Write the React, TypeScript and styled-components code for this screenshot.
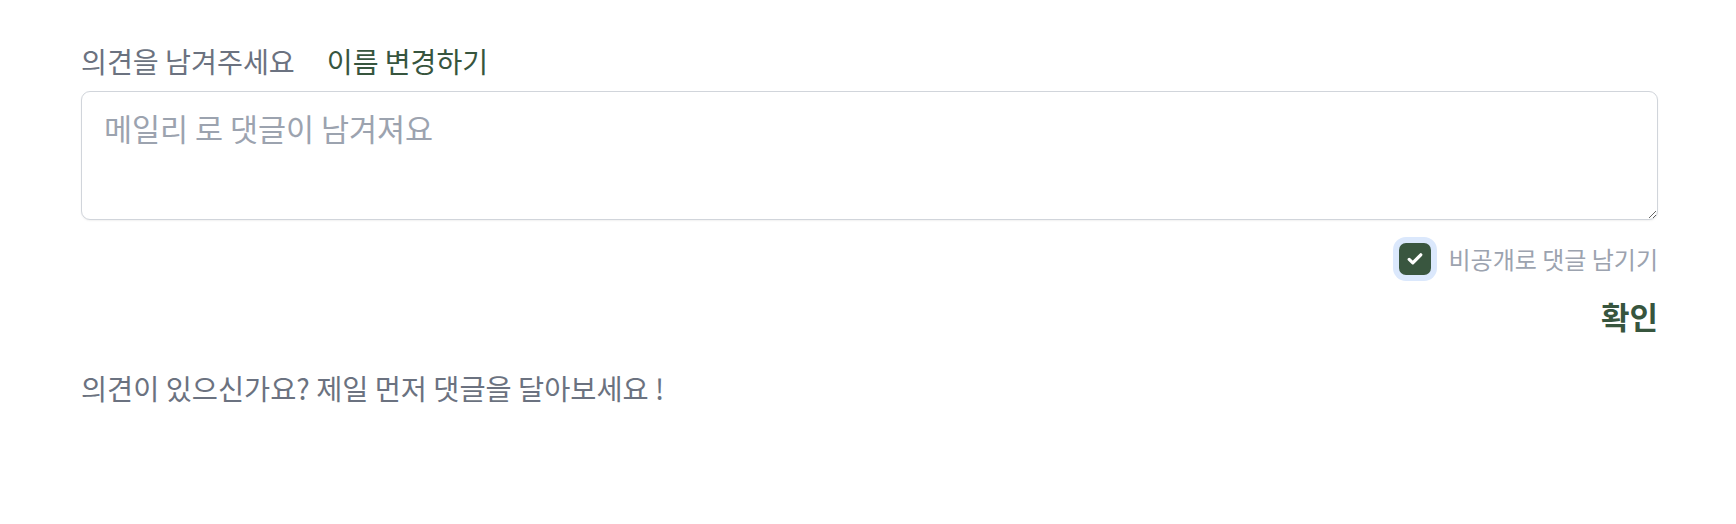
import React, { useState } from 'react';
import styled, { createGlobalStyle } from 'styled-components';

const GlobalStyle = createGlobalStyle`
  body {
    margin: 0;
    background: #ffffff;
    font-family: 'Noto Sans CJK KR', 'Noto Sans', sans-serif;
  }
`;

export default function App() {
  const [isPrivate, setIsPrivate] = useState(true);

  return (
    <>
      <GlobalStyle />
      <CommentSection>
        <LabelRow>
          <Label>의견을 남겨주세요</Label>
          <NameButton>이름 변경하기</NameButton>
        </LabelRow>
        <TextArea placeholder="메일리 로 댓글이 남겨져요" />
        <PrivateRow onClick={() => setIsPrivate(!isPrivate)}>
          <CheckBox $checked={isPrivate}>
            {isPrivate && (
              <svg width="20" height="20" viewBox="0 0 20 20" fill="none">
                <path
                  d="M4.2 10.4l3.6 3.4 8-8"
                  stroke="#ffffff"
                  strokeWidth="3.2"
                  strokeLinecap="round"
                  strokeLinejoin="round"
                />
              </svg>
            )}
          </CheckBox>
          <PrivateText>비공개로 댓글 남기기</PrivateText>
        </PrivateRow>
        <SubmitRow>
          <SubmitButton>확인</SubmitButton>
        </SubmitRow>
        <EmptyText>의견이 있으신가요? 제일 먼저 댓글을 달아보세요 !</EmptyText>
      </CommentSection>
    </>
  );
}

const CommentSection = styled.div`
  display: flex;
  flex-direction: column;
  padding: 40px 78px 40px 81px;
`;

const LabelRow = styled.div`
  display: flex;
  align-items: center;
  gap: 32px;
  height: 40px;
`;

const Label = styled.span`
  font-size: 28.2px;
  color: #6b7280;
`;

const NameButton = styled.button`
  border: none;
  background: none;
  padding: 0;
  font-family: inherit;
  font-size: 28.1px;
  color: #37553e;
  cursor: pointer;
`;

const TextArea = styled.textarea`
  margin-top: 11px;
  height: 129px;
  box-sizing: border-box;
  padding: 14px 22px;
  border: 1.5px solid #d1d5db;
  border-radius: 9px;
  box-shadow: 0 1px 2px rgb(0 0 0 / 6%);
  font-family: inherit;
  font-size: 30.5px;
  line-height: 1.5;
  color: #374151;
  outline: none;

  &::placeholder {
    color: #9ca3af;
  }
`;

const PrivateRow = styled.label`
  margin-top: 21px;
  align-self: flex-end;
  display: flex;
  align-items: center;
  gap: 18px;
  cursor: pointer;
`;

const CheckBox = styled.span<{ $checked: boolean }>`
  width: 32px;
  height: 32px;
  border-radius: 7px;
  display: flex;
  align-items: center;
  justify-content: center;
  background: ${p => (p.$checked ? '#39563f' : '#ffffff')};
  border: ${p => (p.$checked ? 'none' : '1.5px solid #d1d5db')};
  box-shadow: 0 0 0 6px #dbe8fc;
`;

const PrivateText = styled.span`
  font-size: 24px;
  color: #9ca3af;
`;

const SubmitRow = styled.div`
  margin-top: 17px;
  display: flex;
  justify-content: flex-end;
`;

const SubmitButton = styled.button`
  border: none;
  background: none;
  padding: 0;
  font-family: inherit;
  font-size: 31px;
  font-weight: 700;
  color: #37553e;
  cursor: pointer;
`;

const EmptyText = styled.p`
  margin: 29px 0 0;
  font-size: 28.4px;
  color: #6b7280;
`;
